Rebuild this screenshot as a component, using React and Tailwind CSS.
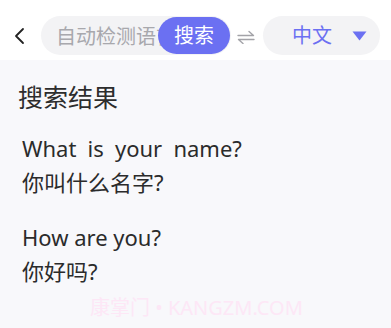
const font = { fontFamily: '"Noto Sans", "Noto Sans CJK SC", sans-serif' };

function SwapIcon() {
  return (
    <svg width="18" height="14" viewBox="0 0 18 14" fill="none" stroke="#a3a3a8" strokeWidth="1.4" strokeLinecap="round" strokeLinejoin="round">
      <path d="M1 5.5h15.5L12 1.5" />
      <path d="M17 9.5H1.5L6 13.5" />
    </svg>
  );
}

export default function App() {
  const results = [
    { en: 'What is your name?', zh: '你叫什么名字?', wide: true },
    { en: 'How are you?', zh: '你好吗?' },
  ];

  return (
    <div className="w-[391px] h-[328px] bg-[#f8f8fb] overflow-hidden relative" style={font}>
      <header className="h-[60px] bg-white flex items-center pt-[11px] pl-[12px] pr-[11px]">
        <svg width="16" height="20" viewBox="0 0 16 20" fill="none" stroke="#222" strokeWidth="1.8" strokeLinecap="round" strokeLinejoin="round" className="mr-[13px]">
          <path d="M11 3L4 10l7 7" />
        </svg>
        <div className="relative flex items-center h-[39px] w-[190px] rounded-full bg-[#f3f3f5] pl-[15px]">
          <span className="text-[20px] text-[#a8a8ad] whitespace-nowrap overflow-hidden w-[108px]" style={{ fontFamily: '"Noto Sans CJK SC", sans-serif' }}>
            自动检测语言
          </span>
          <button className="absolute left-[117px] top-[1px] h-[37px] w-[72px] rounded-full bg-[#6b70f2] text-white text-[20px] flex items-center justify-center">
            搜索
          </button>
        </div>
        <div className="ml-[-2px] w-[34px] flex justify-center pt-[2px]">
          <SwapIcon />
        </div>
        <div className="flex items-center h-[39px] flex-1 rounded-full bg-[#f3f3f5] pl-[29px] pr-[13px]">
          <span className="text-[20px] text-[#6b70f2]">中文</span>
          <svg width="15" height="10" viewBox="0 0 15 10" className="ml-auto">
            <path d="M0.5 0.5h14L7.5 9.5z" fill="#6b70f2" />
          </svg>
        </div>
      </header>

      <main className="px-[18px] pt-[20px]">
        <h2 className="text-[25px] leading-[34px] text-[#2d2d2d]">搜索结果</h2>
        <div className="pl-[4px] mt-[17px] flex flex-col gap-[21px]">
          {results.map((r) => (
            <div key={r.en} className="text-[22px] leading-[34px] text-[#2b2b2b]">
              <p className={r.wide ? '[word-spacing:0.25em]' : ''}>{r.en}</p>
              <p>{r.zh}</p>
            </div>
          ))}
        </div>
      </main>

      <div className="absolute left-[90px] top-[293px] text-[20px] text-[#fde7f6] whitespace-nowrap">
        康掌门 • KANGZM.COM
      </div>
    </div>
  );
}
